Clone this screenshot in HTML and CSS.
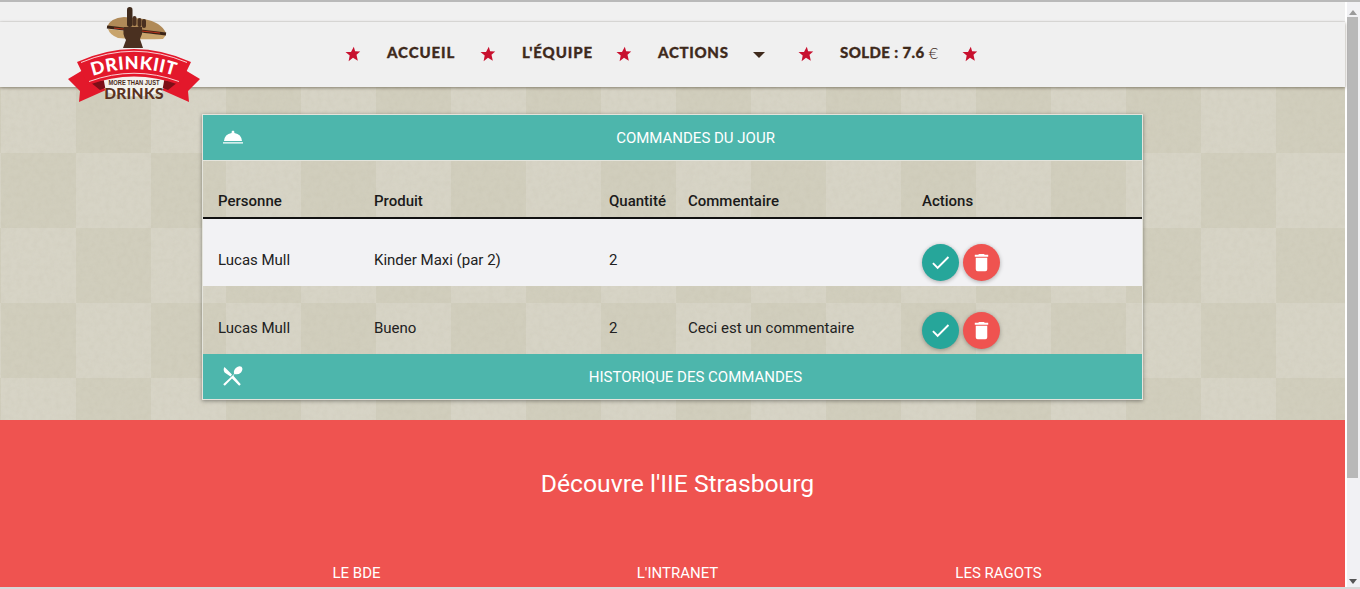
FILE: index.html
```html
<!DOCTYPE html>
<html lang="fr">
<head>
<meta charset="utf-8">
<title>Drinkiit</title>
<link rel="stylesheet" href="styles.css">
</head>
<body>
<div class="window">
  <div class="page">
    <div class="topstrip"></div>
    <header class="nav">
      <svg class="logo" viewBox="0 0 136 106" width="136" height="106">
        <path d="M41 21 Q44 12 58 11 L78 13 Q95 16 100 27 Z" fill="#b08a58"/>
        <path d="M42 23 L100 29 L97 33 Q70 34 52 32 Q44 29 42 23 Z" fill="#c8a46c"/>
        <path d="M41 21 L100 28" stroke="#3a2316" stroke-width="3"/>
        <path d="M48 22 L94 27" stroke="#b8321c" stroke-width="1"/>
        <rect x="61" y="1" width="5.500" height="20" rx="2.700" fill="#3f2a1c"/>
        <rect x="66.500" y="10" width="4" height="10" rx="2" fill="#4a3020"/>
        <rect x="71.500" y="12" width="4" height="9" rx="2" fill="#4a3020"/>
        <rect x="76" y="13" width="4" height="9" rx="2" fill="#4a3020"/>
        <path d="M58 21 H76 V28 L74 33 L77 42 H57 L60 34 Q56 28 58 21 Z" fill="#4a3020"/>
        <path d="M2 73 L17 64 L40 84 L13 96 L14 85 Z" fill="#e3182b"/>
        <path d="M134 73 L119 64 L96 84 L123 96 L122 85 Z" fill="#e3182b"/>
        <path d="M24 76 L38 74 L44 80 L34 84 Z" fill="#7d0f18"/>
        <path d="M112 76 L98 74 L92 80 L102 84 Z" fill="#7d0f18"/>
        <path d="M37 70 H99 L96 86 Q68 95 40 86 Z" fill="#f4f2ee"/>
        <path d="M11 56 Q68 30 125 56 L114 79 Q68 62 22 79 Z" fill="#e3182b"/>
        <path d="M15 56.500 Q68 34 121 56.500" fill="none" stroke="#fff" stroke-width="0.800"/>
        <path d="M23 75.500 Q68 59 113 75.500" fill="none" stroke="#fff" stroke-width="0.800"/>
        <path id="logoArc" d="M24 71 Q68 55 112 71" fill="none"/>
        <text class="logo-main"><textPath href="#logoArc" startOffset="50%" text-anchor="middle">DRINKIIT</textPath></text>
        <text class="logo-sub" x="68" y="79" text-anchor="middle" textLength="51" lengthAdjust="spacingAndGlyphs">MORE THAN JUST</text>
        <text class="logo-drinks" x="68" y="93" text-anchor="middle">DRINKS</text>
      </svg>
      <nav class="menu">
        <svg class="star" viewBox="0 0 16 16" width="16" height="16"><path d="M8.800 .8 L10.100 5.200 L15.200 5.400 L11.500 8.800 L12.800 14.800 L8 11.800 L3.600 15.200 L4.700 9.600 L.5 6 L6 6 Z"/></svg>
        <a class="item w-accueil">ACCUEIL</a>
        <svg class="star" viewBox="0 0 16 16" width="16" height="16"><path d="M8.800 .8 L10.100 5.200 L15.200 5.400 L11.500 8.800 L12.800 14.800 L8 11.800 L3.600 15.200 L4.700 9.600 L.5 6 L6 6 Z"/></svg>
        <a class="item w-equipe">L'ÉQUIPE</a>
        <svg class="star" viewBox="0 0 16 16" width="16" height="16"><path d="M8.800 .8 L10.100 5.200 L15.200 5.400 L11.500 8.800 L12.800 14.800 L8 11.800 L3.600 15.200 L4.700 9.600 L.5 6 L6 6 Z"/></svg>
        <a class="item w-actions">ACTIONS<span class="caret"></span></a>
        <svg class="star" viewBox="0 0 16 16" width="16" height="16"><path d="M8.800 .8 L10.100 5.200 L15.200 5.400 L11.500 8.800 L12.800 14.800 L8 11.800 L3.600 15.200 L4.700 9.600 L.5 6 L6 6 Z"/></svg>
        <a class="item w-solde">SOLDE : 7.6 <span class="euro">€</span></a>
        <svg class="star" viewBox="0 0 16 16" width="16" height="16"><path d="M8.800 .8 L10.100 5.200 L15.200 5.400 L11.500 8.800 L12.800 14.800 L8 11.800 L3.600 15.200 L4.700 9.600 L.5 6 L6 6 Z"/></svg>
      </nav>
    </header>
    <main class="content">
      <section class="card">
        <div class="bar">
          <svg class="bar-icon" viewBox="0 0 24 24" width="24" height="24"><path d="M3 17.200 H23 V18.600 H3 Z M4 16 Q4.600 9.200 11.600 8 Q11.200 5.600 13 5.400 Q14.800 5.600 14.400 8 Q21.400 9.200 22 16 Z"/></svg>
          <span class="bar-title">COMMANDES DU JOUR</span>
        </div>
        <div class="table">
          <div class="row head">
            <span class="c1">Personne</span><span class="c2">Produit</span><span class="c3">Quantité</span><span class="c4">Commentaire</span><span class="c5">Actions</span>
          </div>
          <div class="row odd">
            <span class="c1">Lucas Mull</span><span class="c2">Kinder Maxi (par 2)</span><span class="c3">2</span><span class="c4"></span>
            <span class="c5 btns">
              <span class="fab teal"><svg viewBox="0 0 24 24" width="24" height="24"><path d="M9 16.200 L4.800 12 L3.400 13.400 L9 19 L21 7 L19.600 5.600 Z"/></svg></span>
              <span class="fab red"><svg viewBox="0 0 24 24" width="24" height="24"><path d="M6 19 a2 2 0 0 0 2 2 h8 a2 2 0 0 0 2-2 V7 H6 Z M19 4 h-3.500 l-1-1 h-5 l-1 1 H5 v2 h14 Z"/></svg></span>
            </span>
          </div>
          <div class="row even">
            <span class="c1">Lucas Mull</span><span class="c2">Bueno</span><span class="c3">2</span><span class="c4">Ceci est un commentaire</span>
            <span class="c5 btns">
              <span class="fab teal"><svg viewBox="0 0 24 24" width="24" height="24"><path d="M9 16.200 L4.800 12 L3.400 13.400 L9 19 L21 7 L19.600 5.600 Z"/></svg></span>
              <span class="fab red"><svg viewBox="0 0 24 24" width="24" height="24"><path d="M6 19 a2 2 0 0 0 2 2 h8 a2 2 0 0 0 2-2 V7 H6 Z M19 4 h-3.500 l-1-1 h-5 l-1 1 H5 v2 h14 Z"/></svg></span>
            </span>
          </div>
        </div>
        <div class="bar">
          <svg class="bar-icon" viewBox="0 0 24 24" width="24" height="24"><path d="M4.500 3 L12 10.500 L10.500 12.600 L4.600 8.500 Q2.800 5.500 4.500 3 Z M20.800 20.200 L19.200 21.800 L12 14.600 L4.800 21.800 L3.200 20.200 L14.200 10.100 Q13 7 15.800 4 Q19 1.200 21.500 2.800 Q23.600 5 21 8.400 Q18 11.200 14.600 10 L13.400 11.700 Z"/></svg>
          <span class="bar-title">HISTORIQUE DES COMMANDES</span>
        </div>
      </section>
    </main>
    <footer class="footer">
      <h2 class="footer-title">Découvre l'IIE Strasbourg</h2>
      <div class="footer-links">
        <span>LE BDE</span><span>L'INTRANET</span><span>LES RAGOTS</span>
      </div>
    </footer>
  </div>
  <div class="scrollbar">
    <span class="arrow up"></span>
    <span class="thumb"></span>
    <span class="spacer"></span>
    <span class="arrow down"></span>
  </div>
</div>
</body>
</html>
```

FILE: styles.css
```css
* { box-sizing: border-box; }
html, body { margin: 0; height: 589px; overflow: hidden; }
body { font-family: Roboto, "Liberation Sans", sans-serif; color: #212121; background: #fff; }
.window { display: flex; height: 589px; border-top: 2px solid #b9b9b9; border-bottom: 2px solid #d8d8d8; overflow: hidden; }
.page { width: 1345px; flex: none; display: flex; flex-direction: column; background-color: #d6d3c5; }
.topstrip { height: 20px; flex: none; background: #f0f0f0; border-bottom: 1px solid #e6e6e6; }
.nav { height: 65px; flex: none; background: #f0f0f0; box-shadow: 0 1px 3px rgba(70,60,40,.55); position: relative; z-index: 2; display: flex; justify-content: flex-start; }
.logo { position: absolute; left: 66px; top: -16px; }
.logo-main { font: 900 18px "Lato", sans-serif; fill: #fff; letter-spacing: .6px; }
.logo-sub { font: 700 7px "Liberation Sans", sans-serif; fill: #4a2c1c; }
.logo-drinks { font: 900 15.500px "Lato", sans-serif; fill: #5a3322; letter-spacing: .3px; }
.menu { display: flex; align-items: center; margin-left: 345px; height: 60px; }
.star { fill: #c8102e; flex: none; margin-top: 3px; }
.item { font: 900 15px "Lato", sans-serif; color: #3f2a1c; letter-spacing: .9px; -webkit-text-stroke: .3px #3f2a1c; white-space: nowrap; display: flex; align-items: center; }
.w-accueil { margin: 0 25px 0 26px; width: 68px; }
.w-equipe { margin: 0 24px 0 26px; width: 70px; }
.w-actions { margin: 0 25px 0 26px; width: 115px; letter-spacing: .7px; }
.w-solde { margin: 0 24px 0 26px; width: 98px; gap: 4px; letter-spacing: .4px; }
.euro { font: 300 16px "Lato", sans-serif; -webkit-text-stroke: 0; }
.caret { width: 0; height: 0; margin: 5px 0 0 24px; border-left: 6px solid transparent; border-right: 6px solid transparent; border-top: 6px solid #3f2a1c; }
.content {
  flex: none; height: 333px; display: flex; justify-content: flex-start; padding: 27px 0 0 202px;
  background-color: #d7d4c6;
  background-image:
    url("data:image/svg+xml,%3Csvg xmlns='http://www.w3.org/2000/svg' width='300' height='300'%3E%3Cfilter id='n'%3E%3CfeTurbulence type='fractalNoise' baseFrequency='.18' numOctaves='3'/%3E%3CfeColorMatrix values='0 0 0 0 .4 0 0 0 0 .38 0 0 0 0 .28 0 0 0 .16 -.05'/%3E%3C/filter%3E%3Crect width='300' height='300' filter='url(%23n)'/%3E%3C/svg%3E"),
    conic-gradient(#d1cebd 25%, transparent 0 50%, #d1cebd 0 75%, transparent 0);
  background-size: 300px 300px, 150px 150px;
  background-position: 0 0, 76px 66px;
}
.card { width: 941px; height: 286px; box-shadow: 0 1px 4px rgba(0,0,0,.4); border: 1px solid #e4e4dc; display: flex; flex-direction: column; }
.bar { height: 45px; flex: none; background: #4db6ac; color: #fff; display: flex; align-items: center; position: relative; justify-content: center; font-size: 15px; padding-left: 46px; }
.bar + .table { border-top: 1px solid #e4e4dc; }
.bar-icon { position: absolute; left: 17px; top: 10px; fill: #fff; }
.table { flex: 1; display: flex; flex-direction: column; font-size: 15px; color: #212121; }
.row { display: flex; align-items: center; padding-left: 15px; }
.c1 { width: 156px; } .c2 { width: 235px; } .c3 { width: 79px; } .c4 { width: 234px; } .c5 { width: 200px; }
.head { height: 58px; font-weight: 500; padding-top: 24px; border-bottom: 2px solid #111; color: #1a1a1a; }
.odd { height: 67px; background: #f2f2f4; padding-top: 15px; }
.even { height: 68px; padding-top: 15px; }
.btns { display: flex; gap: 4px; padding-top: 5px; }
.fab { width: 37px; height: 37px; border-radius: 50%; display: flex; align-items: center; justify-content: center; fill: #fff; box-shadow: 0 1px 4px rgba(0,0,0,.3); }
.fab svg { width: 23px; height: 23px; }
.teal { background: #26a69a; }
.red { background: #ef5350; }
.footer { flex: 1; background: #ef5350; color: #fff; text-align: center; }
.footer-title { font-weight: 400; font-size: 24.700px; margin: 48px 0 0; padding-left: 10px; line-height: 32px; }
.footer-links { display: flex; margin-top: 64px; padding: 0 186px 0 196px; font-size: 15px; }
.footer-links span { flex: 1; }
.scrollbar { flex: 1; display: flex; flex-direction: column; align-items: center; background: #f1f1f4; border-left: 2px solid #fff; padding: 6px 2px 0 0; }
.arrow { width: 0; height: 0; border-left: 4px solid transparent; border-right: 4px solid transparent; flex: none; }
.up { border-bottom: 5px solid #9a9a9a; margin-top: 2px; }
.down { border-top: 5px solid #555; margin-bottom: 3px; }
.thumb { width: 11px; height: 461px; background: #b8b8b8; margin-top: 2px; flex: none; }
.spacer { flex: 1; }
```
